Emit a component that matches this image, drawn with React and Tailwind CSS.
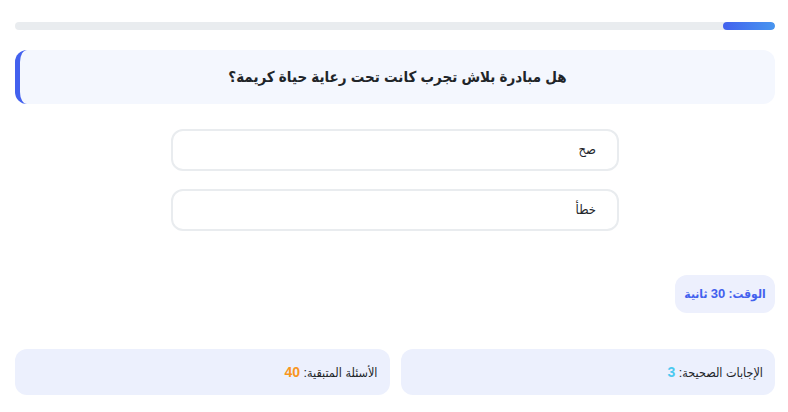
import React from 'react';

function App() {
    const answers = ['صح', 'خطأ'];

    return (
        <div dir="rtl" className="min-h-screen bg-white pl-[15px] pr-[13px] pt-[22px]" style={{ fontFamily: '"Liberation Sans", "DejaVu Sans Condensed", "DejaVu Sans", Arial, sans-serif' }}>
            {/* Progress */}
            <div className="h-2 w-full rounded-full bg-[#e9ecef] overflow-hidden">
                <div className="h-full w-[52px] rounded-full bg-gradient-to-l from-[#4895ef] to-[#4361ee]"></div>
            </div>

            {/* Question */}
            <div className="mt-[20px] h-[54px] flex items-center justify-center rounded-xl border-l-[5px] border-[#4361ee] bg-[#f4f7fe]">
                <h2 className="text-[15px] font-bold text-[#212529]">هل مبادرة بلاش تجرب كانت تحت رعاية حياة كريمة؟</h2>
            </div>

            {/* Options */}
            <div className="mt-[25px] flex flex-col items-center gap-[18px]">
                {answers.map((a) => (
                    <button
                        key={a}
                        className="w-[448px] h-[42px] rounded-xl border-2 border-[#e9ecef] bg-white pr-[21px] pl-[30px] text-right text-[13px] text-[#212529]"
                    >
                        {a}
                    </button>
                ))}
            </div>

            {/* Timer */}
            <div className="mt-[44px] flex">
                <div className="h-[38px] w-[100px] flex items-center justify-center rounded-xl bg-[#edf0fd] text-[12px] font-bold text-[#4361ee]">
                    <span>الوقت: <span className="text-[13px]">30</span> ثانية</span>
                </div>
            </div>

            {/* Stats */}
            <div className="mt-[36px] grid grid-cols-2 gap-[11px]">
                <div className="h-[46px] flex items-center rounded-xl bg-[#ecf0fd] px-[12px] text-[12.5px] text-[#212529]">
                    <span>الإجابات الصحيحة: <span className="text-[14px] font-bold text-[#4cc9f0]">3</span></span>
                </div>
                <div className="h-[46px] flex items-center rounded-xl bg-[#ecf0fd] px-[12px] text-[12.5px] text-[#212529]">
                    <span>الأسئلة المتبقية: <span className="text-[14px] font-bold text-[#f8961e]">40</span></span>
                </div>
            </div>
        </div>
    );
}

export default App;
